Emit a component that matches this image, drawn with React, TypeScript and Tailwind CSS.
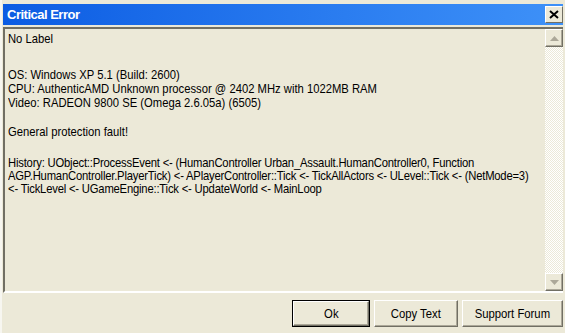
import React from "react";

function ScrollButton({ up }: { up: boolean }) {
  return (
    <div className="w-[18px] h-[18px] bg-[#ECE9D8] border border-t-white border-l-white border-r-[#716F64] border-b-[#716F64] flex items-center justify-center shadow-[inset_-1px_-1px_0_#ACA899]">
      <svg width="9" height="5" viewBox="0 0 9 5">
        {up ? (
          <polygon points="4.5,0 9,5 0,5" fill="#ACA899" />
        ) : (
          <polygon points="0,0 9,0 4.5,5" fill="#ACA899" />
        )}
      </svg>
    </div>
  );
}

function Button({ label, width, isDefault }: { label: string; width: string; isDefault?: boolean }) {
  return (
    <div className={`${width} h-[27px] ${isDefault ? "border border-black" : ""} bg-[#ECE9D8]`}>
      <div className="h-full w-full border border-t-white border-l-white border-r-[#716F64] border-b-[#716F64] flex items-center justify-center shadow-[inset_-1px_-1px_0_#ACA899]">
        <span className="text-[13px] text-black scale-x-[0.87] whitespace-nowrap">{label}</span>
      </div>
    </div>
  );
}

export default function App() {
  return (
    <div
      className="w-[565px] h-[333px] bg-[#ECE9D8] flex flex-col border-l-[2px] border-l-[#F7F6F0] pl-px pr-[2px] pt-[4px]"
      style={{ fontFamily: '"Liberation Sans", Arial, sans-serif' }}
    >
      {/* Title bar */}
      <div className="h-[21px] bg-linear-to-r from-[#0B5CE3] to-[#3E91F8] flex items-center justify-between pl-[4px]">
        <span className="text-white font-bold text-[13px] tracking-[-0.5px]">Critical Error</span>
        <div className="w-[18px] h-[17px] bg-[#ECE9D8] border border-t-white border-l-white border-r-[#716F64] border-b-[#716F64] flex items-center justify-center">
          <svg width="10" height="9" viewBox="0 0 10 9">
            <path d="M1 1 L9 8 M9 1 L1 8" stroke="#000" strokeWidth="2" />
          </svg>
        </div>
      </div>

      {/* Edit area */}
      <div className="mt-[2px] h-[266px] flex border-t-2 border-l-2 border-t-[#716F64] border-l-[#716F64] border-b-2 border-b-white">
        <div className="flex-1 min-w-0 pl-[3px] pt-[3px] overflow-hidden">
          <div className="w-[620px] origin-top-left scale-x-[0.865] text-[13px] text-black whitespace-nowrap leading-[14px]">
            <div>No Label</div>
            <div className="mt-[22px]">OS: Windows XP 5.1 (Build: 2600)</div>
            <div>CPU: AuthenticAMD Unknown processor @ 2402 MHz with 1022MB RAM</div>
            <div>Video: RADEON 9800 SE (Omega 2.6.05a) (6505)</div>
            <div className="mt-[15px]">General protection fault!</div>
            <div className="mt-[17px] leading-[13px] tracking-[-0.22px]">
              <div>History: UObject::ProcessEvent &lt;- (HumanController Urban_Assault.HumanController0, Function</div>
              <div>AGP.HumanController.PlayerTick) &lt;- APlayerController::Tick &lt;- TickAllActors &lt;- ULevel::Tick &lt;- (NetMode=3)</div>
              <div>&lt;- TickLevel &lt;- UGameEngine::Tick &lt;- UpdateWorld &lt;- MainLoop</div>
            </div>
          </div>
        </div>
        <div className="w-[18px] flex flex-col bg-[repeating-conic-gradient(#ffffff_0_25%,#ECE9D8_0_50%)] bg-[length:2px_2px]">
          <ScrollButton up />
          <div className="flex-1" />
          <ScrollButton up={false} />
        </div>
      </div>

      {/* Buttons */}
      <div className="flex justify-end gap-[4px] mt-[7px]">
        <Button label="Ok" width="w-[78px]" isDefault />
        <Button label="Copy Text" width="w-[84px]" />
        <Button label="Support Forum" width="w-[101px]" />
      </div>
    </div>
  );
}
